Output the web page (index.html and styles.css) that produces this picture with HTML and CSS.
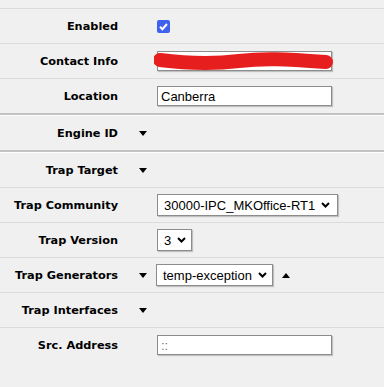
FILE: index.html
```html
<!DOCTYPE html>
<html lang="en">
<head>
    <meta charset="UTF-8">
    <title>SNMP</title>
    <link rel="stylesheet" href="styles.css">
</head>
<body>
    <div class="form">
        <div class="row row-top"></div>
        <div class="row">
            <div class="label">Enabled</div>
            <div class="toggle"></div>
            <div class="control">
                <span class="check">
                    <svg width="13" height="13" viewBox="0 0 13 13"><path d="M3 6.8 L5.4 9.2 L10 4" fill="none" stroke="#fff" stroke-width="2"/></svg>
                </span>
            </div>
        </div>
        <div class="row">
            <div class="label">Contact Info</div>
            <div class="toggle"></div>
            <div class="control">
                <div class="redacted">
                    <input class="text" type="text" value="">
                    <!-- tachado rojo encima del valor -->
                    <svg class="scribble" width="180" height="20" viewBox="0 0 180 20">
                        <path d="M6 9 C 30 12, 60 13, 85 10 S 130 8, 172 11" fill="none" stroke="#e61e1e" stroke-width="14" stroke-linecap="round"/>
                    </svg>
                </div>
            </div>
        </div>
        <div class="row row-last">
            <div class="label">Location</div>
            <div class="toggle"></div>
            <div class="control"><input class="text" type="text" value="Canberra"></div>
        </div>
        <div class="sep"></div>
        <div class="row row-last">
            <div class="label">Engine ID</div>
            <div class="toggle"><span class="tri-down"></span></div>
            <div class="control"></div>
        </div>
        <div class="sep"></div>
        <div class="row">
            <div class="label">Trap Target</div>
            <div class="toggle"><span class="tri-down"></span></div>
            <div class="control"></div>
        </div>
        <div class="row">
            <div class="label">Trap Community</div>
            <div class="toggle"></div>
            <div class="control">
                <span class="select select-wide">30000-IPC_MKOffice-RT1<svg class="chev" width="9" height="6" viewBox="0 0 9 6"><path d="M1 1 L4.5 4.5 L8 1" fill="none" stroke="#000" stroke-width="2"/></svg></span>
            </div>
        </div>
        <div class="row">
            <div class="label">Trap Version</div>
            <div class="toggle"></div>
            <div class="control">
                <span class="select">3<svg class="chev" width="9" height="6" viewBox="0 0 9 6"><path d="M1 1 L4.5 4.5 L8 1" fill="none" stroke="#000" stroke-width="2"/></svg></span>
            </div>
        </div>
        <div class="row">
            <div class="label">Trap Generators</div>
            <div class="toggle"><span class="tri-down"></span></div>
            <div class="control control-gen">
                <span class="select">temp-exception<svg class="chev" width="9" height="6" viewBox="0 0 9 6"><path d="M1 1 L4.5 4.5 L8 1" fill="none" stroke="#000" stroke-width="2"/></svg></span>
                <span class="tri-up"></span>
            </div>
        </div>
        <div class="row">
            <div class="label">Trap Interfaces</div>
            <div class="toggle"><span class="tri-down"></span></div>
            <div class="control"></div>
        </div>
        <div class="row row-last">
            <div class="label">Src. Address</div>
            <div class="toggle"></div>
            <div class="control"><input class="text" type="text" placeholder="::"></div>
        </div>
    </div>
</body>
</html>
```

FILE: styles.css
```css
body {
    margin: 0;
    background: #f0f0f0;
    font-family: "DejaVu Sans", Verdana, sans-serif;
}
.form {
    display: flex;
    flex-direction: column;
}
.row {
    display: flex;
    align-items: center;
    height: 34px;
    border-bottom: 1px solid #dcdcdc;
}
.row-top {
    height: 8px;
}
.row-last {
    border-bottom: none;
}
.sep {
    height: 0;
    border-top: 2px solid #c3c3c3;
    border-bottom: 1px solid #ffffff;
}
.label {
    width: 118px;
    padding-top: 1px;
    text-align: right;
    font-size: 11.3px;
    font-weight: bold;
    color: #000;
}
.toggle {
    width: 39px;
    box-sizing: border-box;
    padding-left: 21px;
    display: flex;
    align-items: center;
}
.control {
    display: flex;
    align-items: center;
}
.control-gen {
    margin-left: -1px;
    gap: 9px;
}
.tri-down {
    width: 0;
    height: 0;
    border-left: 4.5px solid transparent;
    border-right: 4.5px solid transparent;
    border-top: 5px solid #000;
}
.tri-up {
    width: 0;
    height: 0;
    border-left: 4.5px solid transparent;
    border-right: 4.5px solid transparent;
    border-bottom: 5px solid #000;
}
.check {
    width: 13px;
    height: 13px;
    border-radius: 2px;
    background: #3f62ee;
    display: flex;
}
.text {
    width: 175px;
    height: 20px;
    box-sizing: border-box;
    margin: 0;
    padding: 0 3px;
    border: 1px solid #8c8c8c;
    background: #fff;
    box-shadow: 1px 1px 1px rgba(0, 0, 0, 0.2);
    font-family: "Liberation Sans", Arial, sans-serif;
    font-size: 13px;
    color: #000;
    outline: none;
}
.text::placeholder {
    color: #777;
}
.redacted {
    position: relative;
    display: flex;
}
.scribble {
    position: absolute;
    left: -3px;
    top: 0;
}
.select {
    display: flex;
    align-items: center;
    height: 22px;
    box-sizing: border-box;
    padding: 0 5px 0 6px;
    gap: 6px;
    border: 1px solid #8c8c8c;
    background: #fff;
    box-shadow: 1px 1px 1px rgba(0, 0, 0, 0.2);
    font-family: "Liberation Sans", Arial, sans-serif;
    font-size: 13px;
    color: #000;
}
.select-wide {
    width: 181px;
}
.chev {
    flex-shrink: 0;
}
```
